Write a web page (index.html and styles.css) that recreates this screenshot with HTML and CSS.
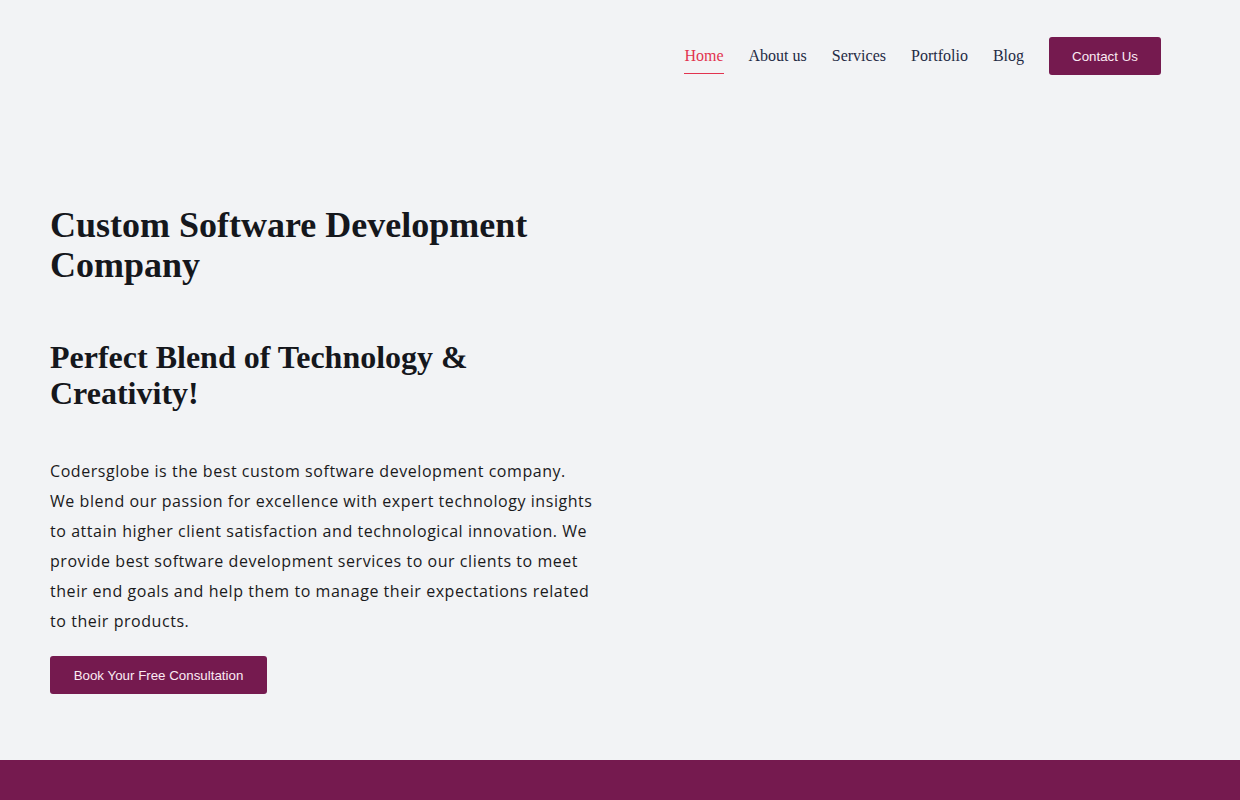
FILE: index.html
```html
<!DOCTYPE html>
<html lang="en">
<head>
<meta charset="utf-8">
<title>Codersglobe</title>
<link rel="stylesheet" href="styles.css">
</head>
<body>
<header class="site-header">
  <nav class="nav">
    <a class="nav-link active" href="#">Home</a>
    <a class="nav-link" href="#">About us</a>
    <a class="nav-link" href="#">Services</a>
    <a class="nav-link" href="#">Portfolio</a>
    <a class="nav-link" href="#">Blog</a>
    <button class="btn btn-contact">Contact Us</button>
  </nav>
</header>
<main>
  <section class="hero">
    <div class="hero-text">
      <h1 class="hero-title">Custom Software Development Company</h1>
      <h2 class="hero-subtitle">Perfect Blend of Technology &amp; Creativity!</h2>
      <p class="hero-desc">Codersglobe is the best custom software development company. We blend our passion for excellence with expert technology insights to attain higher client satisfaction and technological innovation. We provide best software development services to our clients to meet their end goals and help them to manage their expectations related to their products.</p>
      <button class="btn btn-cta">Book Your Free Consultation</button>
    </div>
    <div class="hero-media"></div>
  </section>
  <section class="band"></section>
</main>
</body>
</html>
```
FILE: styles.css
```css
* { box-sizing: border-box; }
html, body { margin: 0; padding: 0; }
body {
  background: #f2f3f5;
  font-family: "Liberation Serif", "Times New Roman", serif;
  color: #15171c;
  overflow: hidden;
}
.site-header {
  height: 112px;
  display: flex;
  align-items: center;
  justify-content: flex-end;
  padding: 0 79px 0 50px;
}
.nav {
  display: flex;
  align-items: center;
  gap: 25px;
}
.nav-link {
  font-size: 16px;
  line-height: 18px;
  padding: 9px 0 8px;
  border-bottom: 1px solid transparent;
  color: #1f2a44;
  text-decoration: none;
}
.nav-link.active {
  color: #e2334f;
  border-bottom-color: #e2334f;
}
.btn {
  font-family: "Liberation Sans", Arial, sans-serif;
  font-size: 13.333px;
  color: #fbeaf3;
  background: #751a4f;
  border: none;
  border-radius: 3px;
  height: 38px;
  padding: 0 23px;
  cursor: pointer;
}
.btn-contact { width: 112px; padding: 0; }
.hero {
  display: grid;
  grid-template-columns: 543px 1fr;
  gap: 50px;
  padding: 93px 50px 66px;
}
.hero-title {
  font-size: 36px;
  line-height: 40px;
  font-weight: 700;
  margin: 0 0 54px;
  color: #15171c;
}
.hero-subtitle {
  font-size: 32px;
  line-height: 36px;
  font-weight: 700;
  margin: 0 0 45px;
  color: #15171c;
}
.hero-desc {
  font-family: "Open Sans", "Noto Sans", sans-serif;
  font-size: 16px;
  line-height: 30px;
  letter-spacing: 0.55px;
  color: #1a1a1c;
  margin: 0 0 20px;
}
.btn-cta { width: 217px; padding: 0; }
.band {
  height: 40px;
  background: #751a4f;
}
```
